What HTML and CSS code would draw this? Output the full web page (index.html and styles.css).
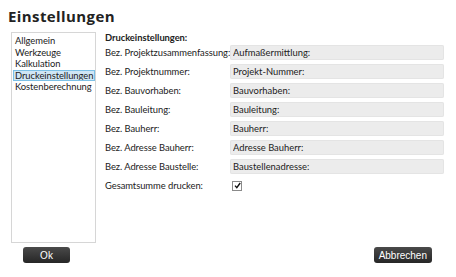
FILE: index.html
```html
<!DOCTYPE html>
<html lang="de">
<head>
    <meta charset="UTF-8">
    <title>Einstellungen</title>
    <link rel="stylesheet" href="styles.css">
</head>
<body>
    <h1 class="title">Einstellungen</h1>

    <div class="main">
        <!-- Kategorien -->
        <ul class="nav-list">
            <li>Allgemein</li>
            <li>Werkzeuge</li>
            <li>Kalkulation</li>
            <li class="active">Druckeinstellungen</li>
            <li>Kostenberechnung</li>
        </ul>

        <div class="panel">
            <h2 class="panel-title">Druckeinstellungen:</h2>
            <div class="form-grid">
                <label>Bez. Projektzusammenfassung:</label>
                <input type="text" class="field" value="Aufmaßermittlung:">
                <label>Bez. Projektnummer:</label>
                <input type="text" class="field" value="Projekt-Nummer:">
                <label>Bez. Bauvorhaben:</label>
                <input type="text" class="field" value="Bauvorhaben:">
                <label>Bez. Bauleitung:</label>
                <input type="text" class="field" value="Bauleitung:">
                <label>Bez. Bauherr:</label>
                <input type="text" class="field" value="Bauherr:">
                <label>Bez. Adresse Bauherr:</label>
                <input type="text" class="field" value="Adresse Bauherr:">
                <label>Bez. Adresse Baustelle:</label>
                <input type="text" class="field" value="Baustellenadresse:">
                <label class="check-label">Gesamtsumme drucken:</label>
                <div class="check-cell">
                    <span class="check">
                        <svg width="7" height="7" viewBox="0 0 7 7"><path d="M1 3.6 L2.8 5.6 L6.2 1" fill="none" stroke="#111" stroke-width="1.4"/></svg>
                    </span>
                </div>
            </div>
        </div>
    </div>

    <div class="footer">
        <button class="btn btn-ok">Ok</button>
        <button class="btn">Abbrechen</button>
    </div>
</body>
</html>
```

FILE: styles.css
```css
body { margin: 0; font-family: Lato, "Noto Sans", sans-serif; font-size: 9.4px; letter-spacing: -0.05px; color: #222; background: #fff; }

.title { margin: 0; padding: 6px 0 0 8px; height: 26px; font-family: "Open Sans", sans-serif; font-size: 15px; font-weight: 700; letter-spacing: 0.4px; }

.main { display: flex; padding-left: 11px; height: 211px; }

/* Liste links */
.nav-list { margin: 0; padding: 2px 0 0 1px; list-style: none; width: 82px; height: 207px; border: 1px solid #d6d6d6; }
.nav-list li { height: 11.5px; line-height: 11px; padding-left: 2px; white-space: nowrap; }
.nav-list li.active { background: #cfe6f5; outline: 1px solid #7cc0e6; outline-offset: -1px; }

/* Einstellungen rechts */
.panel { margin-left: 9px; width: 340px; }
.panel-title { margin: 0; height: 11px; line-height: 11px; font-size: 9.4px; font-weight: 700; }
.form-grid { display: grid; grid-template-columns: 125px 214px; grid-auto-rows: 19px; align-items: center; }
.form-grid label { white-space: nowrap; }
.field { box-sizing: border-box; height: 15px; width: 214px; margin: 0; padding: 0 3px; border: none; border-radius: 2px; background: #ececec; box-shadow: inset 0 0 0 1px #e4e4e4; font-family: inherit; font-size: 9.4px; color: #222; }
.check-cell { display: flex; align-items: center; }
.check { display: flex; align-items: center; justify-content: center; margin-left: 2px; width: 8px; height: 8px; border: 1px solid #8a8a8a; background: #fff; }

/* Buttons */
.footer { display: flex; justify-content: space-between; padding: 4px 24px 0 23px; }
.btn { height: 16px; padding: 0 5px; border: none; border-radius: 3px; background: linear-gradient(#4a4a4a, #262626); color: #fff; font-family: "Liberation Sans", Arial, sans-serif; font-size: 10px; cursor: pointer; }
.btn-ok { width: 47px; }
```
